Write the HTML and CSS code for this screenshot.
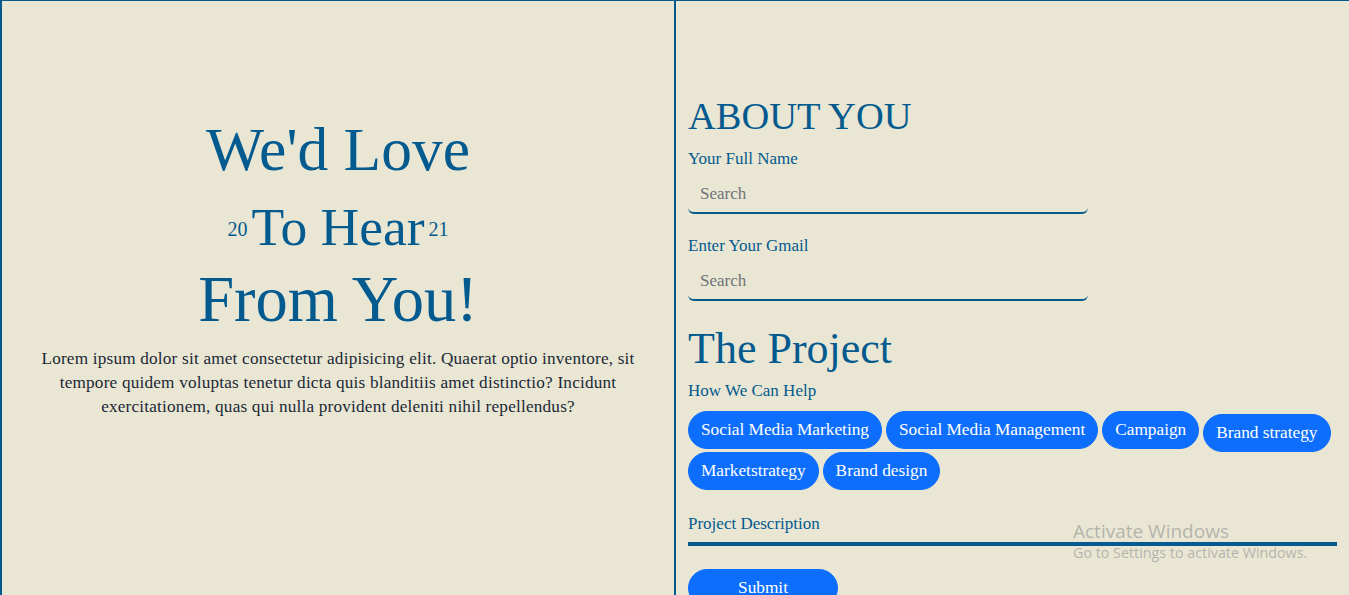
FILE: index.html
```html
<!DOCTYPE html>
<html lang="en">
<head>
<meta charset="utf-8">
<title>Contact</title>
<link rel="stylesheet" href="styles.css">
</head>
<body>
<div class="page">
  <section class="intro">
    <h1 class="love">We'd Love</h1>
    <h2 class="hear"><span class="yr">20</span>To Hear<span class="yr">21</span></h2>
    <h1 class="from">From You!</h1>
    <p class="lead">Lorem ipsum dolor sit amet consectetur adipisicing elit. Quaerat optio inventore, sit tempore quidem voluptas tenetur dicta quis blanditiis amet distinctio? Incidunt exercitationem, quas qui nulla provident deleniti nihil repellendus?</p>
  </section>
  <section class="form">
    <h1 class="title about">ABOUT YOU</h1>
    <label class="lbl">Your Full Name</label>
    <input class="field" type="text" placeholder="Search">
    <label class="lbl gap">Enter Your Gmail</label>
    <input class="field" type="text" placeholder="Search">
    <h1 class="title project">The Project</h1>
    <label class="lbl help">How We Can Help</label>
    <div class="chips">
      <button class="chip">Social Media Marketing</button>
      <button class="chip">Social Media Management</button>
      <button class="chip">Campaign</button>
      <button class="chip low">Brand strategy</button>
      <button class="chip">Marketstrategy</button>
      <button class="chip">Brand design</button>
    </div>
    <label class="lbl desc">Project Description</label>
    <div class="descline"></div>
    <button class="submit">Submit</button>
  </section>
</div>
<div class="activate">
  <div class="act1">Activate Windows</div>
  <div class="act2">Go to Settings to activate Windows.</div>
</div>
</body>
</html>
```

FILE: styles.css
```css
html, body {
  margin: 0;
  padding: 0;
  background: #e9e6d4;
  height: 100%;
  overflow: hidden;
}
body {
  font-family: "Liberation Serif", "Times New Roman", serif;
  color: #035a8f;
}
.page {
  display: flex;
  border-top: 1px solid #035a8f;
  border-left: 2px solid #035a8f;
  min-height: 620px;
  box-sizing: border-box;
}
.intro {
  width: 674px;
  flex: none;
  border-right: 2px solid #035a8f;
  display: flex;
  flex-direction: column;
  align-items: center;
  padding: 112px 12px 0;
  box-sizing: border-box;
}
.love, .hear, .from {
  margin: 0;
  font-weight: 400;
  line-height: 1.2;
  color: #035a8f;
}
.love { font-size: 61.5px; }
.hear {
  font-size: 53.5px;
  display: flex;
  align-items: baseline;
  margin-top: 8px;
}
.yr {
  font-size: 20px;
  margin: 0 4px;
  position: relative;
  top: -9px;
}
.from { font-size: 64.5px; margin-top: 2px; }
.lead {
  margin: 9px 0 0;
  max-width: 612px;
  text-align: center;
  font-size: 17.2px;
  letter-spacing: 0.2px;
  line-height: 24px;
  color: #1c2836;
}
.form {
  flex: 1;
  padding: 92px 12px 0;
  display: flex;
  flex-direction: column;
  align-items: flex-start;
}
.title {
  margin: 0 0 8px;
  font-weight: 400;
  line-height: 1.2;
  color: #035a8f;
}
.about { font-size: 38.5px; }
.project { font-size: 44px; margin-top: 22px; margin-bottom: 0; }
.lbl {
  font-size: 17px;
  line-height: 24px;
  color: #035a8f;
}
.gap { margin-top: 20px; }
.help { margin-top: 3px; margin-bottom: 8px; }
.field {
  margin-top: 5px;
  width: 400px;
  height: 38px;
  box-sizing: border-box;
  padding: 6px 12px;
  font-family: "Liberation Serif", serif;
  font-size: 17px;
  background: transparent;
  border: none;
  border-bottom: 2px solid #035a8f;
  border-radius: 6px;
  outline: none;
}
.field::placeholder { color: #6f7478; }
.chips {
  display: flex;
  flex-wrap: wrap;
  align-items: flex-start;
  column-gap: 4px;
}
.chip, .submit {
  font-family: "Liberation Serif", serif;
  font-size: 17.3px;
  line-height: 24px;
  padding: 6px 12px;
  color: #fff;
  background: #0d6efd;
  border: 1px solid #0d6efd;
  border-radius: 20px;
}
.chip.low { margin-top: 3px; }
.desc { margin-top: 22px; }
.descline {
  align-self: stretch;
  height: 0;
  border-bottom: 4px solid #035a8f;
  margin-top: 6px;
}
.submit {
  margin-top: 23px;
  width: 150px;
}
.activate {
  position: absolute;
  left: 1073px;
  top: 519px;
  font-family: "Open Sans", "Noto Sans", sans-serif;
  color: rgba(135, 135, 135, 0.55);
}
.act1 { font-size: 19px; line-height: 24px; }
.act2 { font-size: 14.3px; line-height: 20px; }
```
